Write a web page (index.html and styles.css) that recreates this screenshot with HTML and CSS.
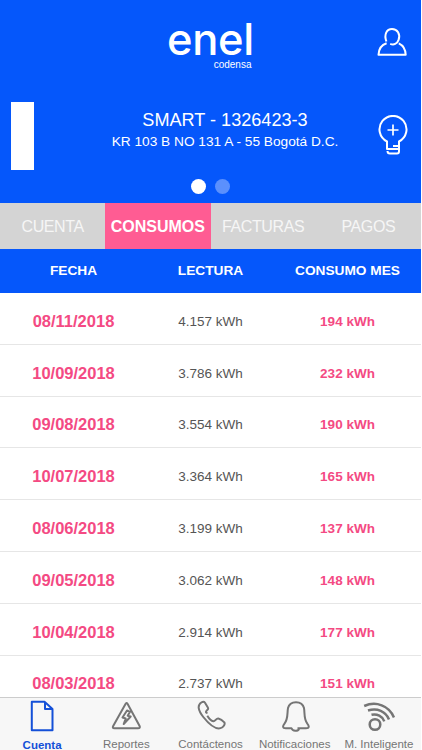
FILE: index.html
```html
<!DOCTYPE html>
<html lang="es">
<head>
    <meta charset="UTF-8">
    <title>Consumos</title>
    <meta name="format-detection" content="telephone=no" />
    <meta name="viewport" content="width=device-width, initial-scale=1" />
    <link rel="stylesheet" href="styles.css">
</head>
<body>
<div class="app">
    <div class="header">
        <div class="topbar">
            <div class="logo">
                <div class="brand">enel</div>
                <div class="sub">codensa</div>
            </div>
            <svg class="user" viewBox="0 0 30 30">
                <path d="M9.400 14.500C6.800 7.500 9.600 2 15 2s8.600 5.200 6.600 10.800c-1.500 4.200-4.800 5.500-8.400 4M9.600 16.200c-5 1.600-7.800 4.800-8.100 11.600h27.200c-.2-6-2.400-9.400-6.900-11.500"/>
            </svg>
        </div>
        <div class="supply">
            <div class="thumb"></div>
            <div class="info">
                <p class="name">SMART - 1326423-3</p>
                <p class="address">KR 103 B NO 131 A - 55 Bogotá D.C.</p>
            </div>
            <svg class="bulb" viewBox="0 0 32 42">
                <path d="M10 31v-4.500a13.500 13.500 0 1 1 12 0V31H16M10 30v4h11.500M22 30v6.300q0 2.200-2 2.200h-7q-2.500 0-2.500-2.500"/>
                <path class="plus" d="M16 9.500v11M10.500 15h11"/>
            </svg>
        </div>
        <div class="dots"><i class="on"></i><i></i></div>
    </div>

    <div class="tabs">
        <div>CUENTA</div>
        <div class="active">CONSUMOS</div>
        <div>FACTURAS</div>
        <div>PAGOS</div>
    </div>

    <div class="row head"><span>FECHA</span><span>LECTURA</span><span>CONSUMO MES</span></div>
    <div class="list">
        <div class="row"><span class="date">08/11/2018</span><span>4.157 kWh</span><span class="use">194 kWh</span></div>
        <div class="row"><span class="date">10/09/2018</span><span>3.786 kWh</span><span class="use">232 kWh</span></div>
        <div class="row"><span class="date">09/08/2018</span><span>3.554 kWh</span><span class="use">190 kWh</span></div>
        <div class="row"><span class="date">10/07/2018</span><span>3.364 kWh</span><span class="use">165 kWh</span></div>
        <div class="row"><span class="date">08/06/2018</span><span>3.199 kWh</span><span class="use">137 kWh</span></div>
        <div class="row"><span class="date">09/05/2018</span><span>3.062 kWh</span><span class="use">148 kWh</span></div>
        <div class="row"><span class="date">10/04/2018</span><span>2.914 kWh</span><span class="use">177 kWh</span></div>
        <div class="row"><span class="date">08/03/2018</span><span>2.737 kWh</span><span class="use">151 kWh</span></div>
    </div>

    <div class="footer">
        <div class="item current">
            <svg viewBox="0 0 32 32"><path d="M16 1.800H5.800v28.400h20.700V9.500M13 1.800h5.500l8 7.200h-7.500V2.500"/></svg>
            <span>Cuenta</span>
        </div>
        <div class="item">
            <svg viewBox="0 0 32 32"><path d="M17.500 3.800L29.600 26q1 2.300-1.600 2.300H4.500Q2 28.300 3.200 26L15.500 4q1-1.700 2-.2zM17 10.500l-4.500 7 3.200 1-2 5.500 7-7.500-3-.7 2.300-4z"/></svg>
            <span>Reportes</span>
        </div>
        <div class="item">
            <svg viewBox="0 0 32 32"><path d="M12.500 13c-2.500-.5-1.500-2 .2-3.500.8-.9.500-1.500 0-2.300L10 2.800c-1-1.500-2.200-1.200-3.700-.3-4 2.700-3.500 7.500 2 14.500 7 8.800 13.600 13.400 18.800 10.500 1.800-1 3.200-3.500 2.200-5.200-1.500-1.700-4.500-3.500-6-3.800-2.200-.4-3 3-5 2.700-1.500-.2-4.500-3-6-5.500"/></svg>
            <span>Contáctenos</span>
        </div>
        <div class="item">
            <svg viewBox="0 0 32 32"><path d="M18.500 28.300H27c3.500 0 3.300-2.200 1.300-4.700-3.800-5-2.300-10.500-3.300-15.500C24 3.800 20.500 2.200 17 2.200S10 3.800 9 8.100C8 13 9.400 18.500 5.500 23.600c-2 2.500-2.100 4.700 1.300 4.700h5.700c1 3.200 6.500 3.400 7.500.500"/></svg>
            <span>Notificaciones</span>
        </div>
        <div class="item">
            <svg class="wifi" viewBox="0 0 32 32"><circle cx="12" cy="24.500" r="5.300"/><path d="M8.500 14.800c5.500-1.300 11 1.500 12.800 6.500M5 10.500c9-3 18 .8 21 9M1.200 6C13 .8 26 5.500 31 17.500"/></svg>
            <span>M. Inteligente</span>
        </div>
    </div>
</div>
</body>
</html>
```

FILE: styles.css
```css
*{
    box-sizing: border-box;
}
body{
    margin: 0;
    background: #fff;
    font-family: "Liberation Sans", Arial, sans-serif;
}
p{
    margin: 0;
}
svg{
    display: block;
    flex: none;
    fill: none;
    stroke: currentColor;
    stroke-width: 2;
    stroke-linejoin: round;
}
.app{
    display: flex;
    flex-direction: column;
    width: 421px;
    height: 750px;
    overflow: hidden;
}
.header{
    flex: none;
    height: 203px;
    background: #0557fb;
    color: #fff;
}
.topbar{
    display: grid;
    grid-template-columns: 1fr 90px 1fr;
    height: 95px;
    padding: 14px 14px 0;
}
.logo{
    grid-column: 2;
}
.brand{
    height: 44px;
    font: 500 43.5px/50px Inter, sans-serif;
    letter-spacing: -.3px;
    text-align: center;
    white-space: nowrap;
}
.sub{
    padding-right: 4px;
    font-size: 10px;
    line-height: 13px;
    text-align: right;
}
.user{
    width: 30px;
    height: 30px;
    margin-top: 13px;
    justify-self: end;
}
.supply{
    display: flex;
    height: 82px;
    padding: 7px 12px 0 11px;
}
.thumb{
    width: 23px;
    height: 68px;
    background: #fff;
}
.info{
    width: 240px;
    margin: 7px 31px 0 71px;
    text-align: center;
    white-space: nowrap;
}
.name{
    font-size: 18.1px;
    line-height: 22px;
}
.address{
    font-size: 13.7px;
    line-height: 22px;
}
.bulb{
    width: 32px;
    height: 42px;
    margin: 13px 0 0 1px;
}
.plus{
    stroke-width: 1.7;
}
.dots{
    display: flex;
    justify-content: center;
    gap: 9px;
    padding-top: 2px;
}
.dots i{
    width: 15px;
    height: 15px;
    border-radius: 50%;
    background: #5b90fd;
}
.dots .on{
    background: #fff;
}
.tabs{
    display: flex;
    flex: none;
    height: 45.5px;
    background: #d4d4d4;
    color: #f6f6f6;
    font-size: 16px;
    letter-spacing: -.4px;
    line-height: 48px;
    text-align: center;
}
.tabs div{
    flex: 1 1 0;
    min-width: 0;
    height: 100%;
}
.tabs .active{
    background: #ff5c93;
    color: #fff;
    letter-spacing: 0;
    font-weight: bold;
}
.row{
    display: grid;
    grid-template-columns: repeat(3, 1fr);
    flex: none;
    align-items: center;
    height: 51.8px;
    padding: 6px 5px 0 5px;
    border-bottom: 1px solid #e6e6e6;
    color: #555;
    font-size: 13.5px;
    text-align: center;
}
.head{
    height: 44.5px;
    padding-top: 0;
    border: 0;
    background: #0557fb;
    color: #fff;
    font-size: 13.7px;
    font-weight: bold;
}
.list{
    flex: 1;
    min-height: 0;
    overflow: hidden;
}
.date, .use{
    color: #f44a83;
    font-weight: bold;
}
.date{
    font-size: 16.5px;
}
.footer{
    display: flex;
    flex: none;
    height: 53px;
    border-top: 1px solid #ccc;
    background: #f7f7f7;
    color: #757575;
}
.item{
    display: flex;
    flex: 1 1 0;
    flex-direction: column;
    align-items: center;
    min-width: 0;
    padding-top: 2px;
    font-size: 11.5px;
    line-height: 14px;
    white-space: nowrap;
}
.item svg{
    width: 32px;
    height: 32px;
    margin-bottom: 5px;
}
.item .wifi{
    stroke-width: 2.5;
}
.current{
    color: #1450d8;
    font-weight: bold;
}
.current span{
    padding-top: 1px;
}
```
